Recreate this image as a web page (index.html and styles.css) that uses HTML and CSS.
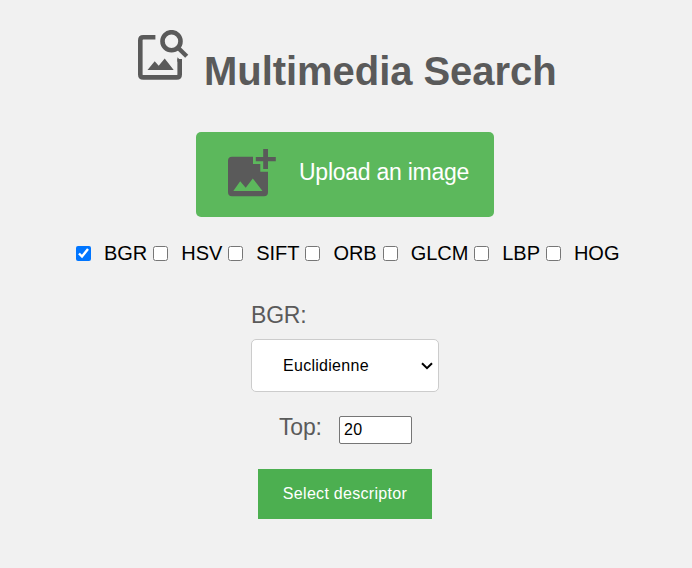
FILE: index.html
```html
<!DOCTYPE html>
<html lang="en">
<head>
<meta charset="utf-8">
<title>Multimedia Search</title>
<link rel="stylesheet" href="styles.css">
</head>
<body>
<main class="page">
  <header class="header">
    <svg class="header-icon" viewBox="0 0 52 52" aria-hidden="true">
      <path d="M18.400 7.300H6.300Q3.300 7.300 3.300 10.300V44.400Q3.300 47.400 6.300 47.400H39.700Q42.700 47.400 42.700 44.400V29" fill="none" stroke="#5a5a5a" stroke-width="4.600"/>
      <path d="M40.400 27.300L45 31.800H40.400Z" fill="#5a5a5a"/>
      <path d="M10.500 40L17.700 31.300L21.700 35.700L27.700 28.500L36.700 40Z" fill="#5a5a5a"/>
      <circle cx="34.500" cy="11.200" r="9" fill="none" stroke="#5a5a5a" stroke-width="4.600"/>
      <path d="M40.500 17.200L49.700 26.200" stroke="#5a5a5a" stroke-width="4.400"/>
    </svg>
    <h1 class="title">Multimedia Search</h1>
  </header>
  <button class="upload" type="button">
    <svg class="upload-icon" viewBox="0 0 48 48" aria-hidden="true">
      <path d="M4 7.700H25V15H32.300V22.700H40V43.300Q40 47.300 36 47.300H4Q0 47.300 0 43.300V11.700Q0 7.700 4 7.700ZM5.300 42H34.500L24.800 29.500L17.700 38.800L12.200 32.300Z" fill="#5a5a5a" fill-rule="evenodd"/>
      <path d="M35.200 0H40V8H47.800V12.200H40V20H35.200V12.200H27.800V8H35.200Z" fill="#5a5a5a"/>
    </svg>
    <span>Upload an image</span>
  </button>
  <div class="options">
    <label class="option"><input type="checkbox" checked><span>BGR</span></label>
    <label class="option"><input type="checkbox"><span>HSV</span></label>
    <label class="option"><input type="checkbox"><span>SIFT</span></label>
    <label class="option"><input type="checkbox"><span>ORB</span></label>
    <label class="option"><input type="checkbox"><span>GLCM</span></label>
    <label class="option"><input type="checkbox"><span>LBP</span></label>
    <label class="option"><input type="checkbox"><span>HOG</span></label>
  </div>
  <div class="distance">
    <label class="caption" for="metric">BGR:</label>
    <div class="metric-box">
      <select class="metric" id="metric"><option>Euclidienne</option></select>
      <svg class="chevron" viewBox="0 0 12 8" aria-hidden="true"><path d="M1 1.200L6 6.200L11 1.200" fill="none" stroke="#000" stroke-width="2"/></svg>
    </div>
  </div>
  <div class="top">
    <label class="caption" for="count">Top:</label>
    <input class="count" id="count" type="text" value="20">
  </div>
  <button class="submit" type="button">Select descriptor</button>
</main>
</body>
</html>
```
FILE: styles.css
```css
* { box-sizing: border-box; }
body {
  margin: 0;
  background: #f1f1f1;
  font-family: "Liberation Sans", Arial, sans-serif;
}
.page {
  display: flex;
  flex-direction: column;
  width: 692px;
  height: 568px;
  padding-top: 30px;
}
.header {
  display: flex;
  height: 102px;
  padding-left: 137px;
}
.header-icon { width: 52px; height: 52px; }
.title {
  margin: 18px 0 0 15px;
  font-size: 40px;
  line-height: 46px;
  letter-spacing: -0.05px;
  color: #5a5a5a;
  white-space: nowrap;
}
.upload {
  display: flex;
  width: 298px;
  height: 85px;
  margin: 0 0 0 196px;
  padding: 17px 0 0 32px;
  border: 0;
  border-radius: 5px;
  background: #5cb85c;
  color: #fff;
  font: 23px/26px "Liberation Sans", Arial, sans-serif;
}
.upload-icon { width: 48px; height: 48px; }
.upload span {
  margin: 10px 0 0 23px;
  letter-spacing: -0.25px;
  white-space: nowrap;
}
.options {
  display: flex;
  gap: 6px;
  margin: 24px 0 0 76px;
  font-size: 20px;
  line-height: 24px;
  letter-spacing: -0.04px;
}
.option { display: flex; }
.option input { width: 15px; height: 15px; margin: 5px 13px 0 0; }
.distance {
  display: flex;
  flex-direction: column;
  width: 188px;
  margin: 37px 0 0 251px;
}
.caption {
  font-size: 23px;
  line-height: 26px;
  letter-spacing: -0.2px;
  color: #5a5a5a;
}
.metric-box {
  position: relative;
  height: 53px;
  margin-top: 11px;
}
.metric {
  appearance: none;
  width: 100%;
  height: 100%;
  padding: 0 0 0 31px;
  border: 1px solid #ccc;
  border-radius: 5px;
  background-color: #fff;
  color: #000;
  font: 16px "Liberation Sans", Arial, sans-serif;
  letter-spacing: 0.28px;
}
.chevron {
  position: absolute;
  top: 23px;
  right: 6px;
  width: 12px;
  height: 8px;
  pointer-events: none;
}
.top {
  display: flex;
  justify-content: space-between;
  width: 133px;
  margin: 24px 0 0 279px;
}
.top .caption { margin-top: -2px; }
.count {
  width: 73px;
  height: 28px;
  padding: 0 4px;
  border: 1px solid #767676;
  border-radius: 2px;
  font: 16px "Liberation Sans", Arial, sans-serif;
  letter-spacing: 0.3px;
}
.submit {
  width: 174px;
  height: 50px;
  margin: 25px 0 0 258px;
  padding: 0;
  border: 0;
  background: #4caf50;
  color: #fff;
  font: 16px "Liberation Sans", Arial, sans-serif;
  letter-spacing: 0.3px;
}
```
